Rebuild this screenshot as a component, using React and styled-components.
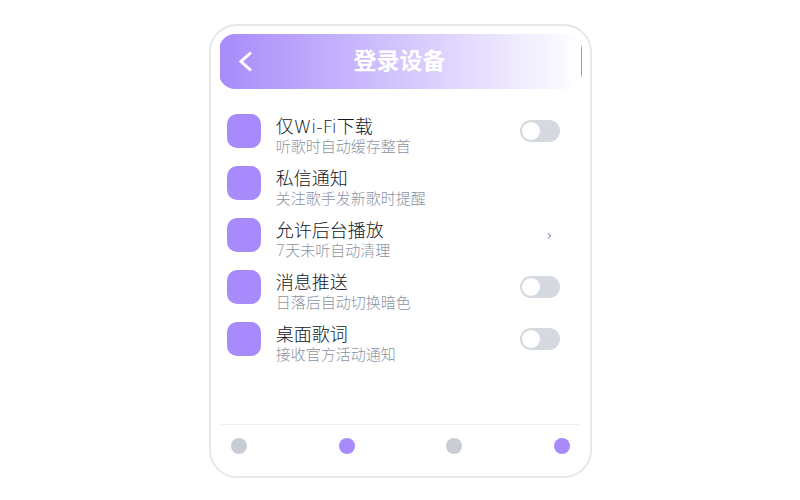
import React, {useState} from 'react';
import styled, {createGlobalStyle} from 'styled-components';

const GlobalStyle = createGlobalStyle`
  * {
    box-sizing: border-box;
  }
  body {
    margin: 0;
    background: #ffffff;
    font-family: "DejaVu Sans", "Noto Sans CJK SC", sans-serif;
    font-weight: 300;
  }
`
const Page = styled.div`
  display: flex;
  align-items: center;
  justify-content: center;
  min-height: 100vh;
  padding: 1px 0 0 1px;
`
const Panel = styled.main`
  display: flex;
  flex-direction: column;
  width: 48%;
  min-width: 320px;
  min-height: 454px;
  padding: 8px;
  border: 2px solid #e5e7eb;
  border-radius: 28px;
`
const Header = styled.header`
  display: grid;
  grid-template-columns: 32px 1fr 34px;
  align-items: center;
  height: 55px;
  padding: 0 10px;
  border: 1px solid transparent;
  border-radius: 16px;
  background: linear-gradient(90deg, #a78bfa, #ffffff);
`
const BackButton = styled.button`
  display: flex;
  align-items: center;
  justify-content: center;
  height: 32px;
  padding: 0;
  border: none;
  background: transparent;
  color: #ffffff;
  cursor: pointer;
`
const Title = styled.h1`
  margin: 0;
  font-size: 23px;
  font-weight: 700;
  line-height: 32px;
  text-align: center;
  color: #ffffff;
`
const SettingList = styled.ul`
  flex: 1;
  margin: 0;
  padding: 16px 22px 16px 8px;
  list-style: none;
`
const SettingItem = styled.li`
  display: flex;
  align-items: center;
  height: 52px;
  gap: 15px;
`
const Thumb = styled.span`
  width: 34px;
  height: 34px;
  border-radius: 10px;
  background: #a78bfa;
`
const SettingText = styled.label`
  display: flex;
  flex: 1;
  flex-direction: column;
  padding-top: 12px;
`
const SettingName = styled.span`
  font-size: 18px;
  line-height: 20px;
  color: #111827;
`
const SettingHint = styled.span`
  font-size: 15px;
  line-height: 20px;
  color: #8b94a3;
`
const Switch = styled.input`
  appearance: none;
  width: 40px;
  height: 22px;
  margin: 0;
  padding: 2px;
  border-radius: 11px;
  background: ${props => props.checked ? '#a78bfa' : '#d5d9e0'};
  cursor: pointer;

  &::before {
    content: "";
    display: block;
    width: 18px;
    height: 18px;
    margin-left: ${props => props.checked ? '18px' : '0'};
    border-radius: 50%;
    background: #ffffff;
  }
`
const MoreButton = styled.button`
  width: 22px;
  height: 22px;
  padding: 0;
  border: none;
  background: transparent;
  color: #8b94a3;
  font-family: inherit;
  font-size: 14px;
  line-height: 22px;
  cursor: pointer;
`
const TabBar = styled.nav`
  display: flex;
  align-items: center;
  justify-content: space-between;
  height: 44px;
  margin: 0 2px;
  padding: 0 10px;
  border-top: 1px solid #f0f0f3;
`
const TabDot = styled.button`
  width: 16px;
  height: 16px;
  padding: 0;
  border: none;
  border-radius: 50%;
  background: ${props => props.$active ? '#a78bfa' : '#c8ccd3'};
  cursor: pointer;
`

const settings = [
  {id: 'wifi', name: '仅Wi-Fi下载', hint: '听歌时自动缓存整首', control: 'switch'},
  {id: 'message', name: '私信通知', hint: '关注歌手发新歌时提醒'},
  {id: 'background', name: '允许后台播放', hint: '7天未听自动清理', control: 'more'},
  {id: 'push', name: '消息推送', hint: '日落后自动切换暗色', control: 'switch'},
  {id: 'lyrics', name: '桌面歌词', hint: '接收官方活动通知', control: 'switch'},
]

const tabs = [false, true, false, true]

const SettingRow = ({setting}) => {
  const [checked, setChecked] = useState(false);
  const {id, name, hint, control} = setting;
  return (
    <SettingItem>
      <Thumb />
      <SettingText as={control ? 'label' : 'div'} htmlFor={control ? id : undefined}>
        <SettingName>{name}</SettingName>
        <SettingHint>{hint}</SettingHint>
      </SettingText>
      {control === 'switch' &&
        <Switch id={id} type="checkbox" checked={checked} onChange={() => setChecked(!checked)} />}
      {control === 'more' && <MoreButton id={id}>›</MoreButton>}
    </SettingItem>
  )
}

function App() {
  return (
    <Page>
      <GlobalStyle />
      <Panel>
        <Header>
          <BackButton>
            <svg width="26" height="26" viewBox="0 0 26 26" fill="none" stroke="currentColor" strokeWidth="3">
              <path d="M18 4.5 8 13.5l10 9" />
            </svg>
          </BackButton>
          <Title>登录设备</Title>
        </Header>
        <SettingList>
          {settings.map(setting => <SettingRow key={setting.id} setting={setting} />)}
        </SettingList>
        <TabBar>
          {tabs.map((active, index) => <TabDot key={index} $active={active} />)}
        </TabBar>
      </Panel>
    </Page>
  )
}

export default App;
